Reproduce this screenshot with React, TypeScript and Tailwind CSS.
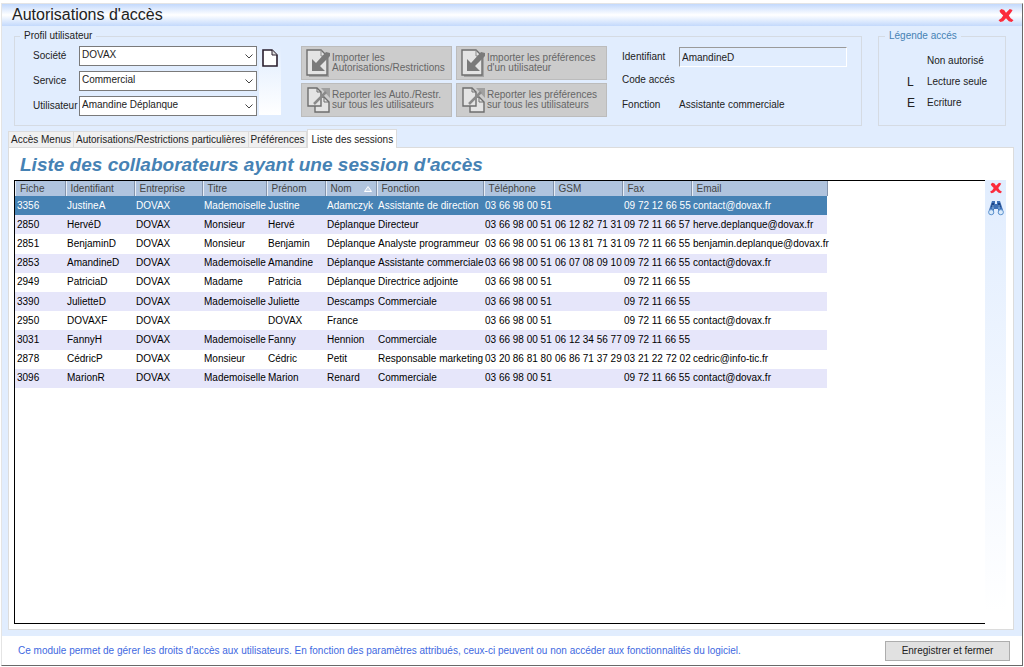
import React from 'react';

interface Session {
  fiche: string;
  identifiant: string;
  entreprise: string;
  titre: string;
  prenom: string;
  nom: string;
  fonction: string;
  telephone: string;
  gsm: string;
  fax: string;
  email: string;
}

const COLUMNS: { key: keyof Session; label: string; width: string }[] = [
  { key: 'fiche', label: 'Fiche', width: 'w-[50px]' },
  { key: 'identifiant', label: 'Identifiant', width: 'w-[69px]' },
  { key: 'entreprise', label: 'Entreprise', width: 'w-[68px]' },
  { key: 'titre', label: 'Titre', width: 'w-[64px]' },
  { key: 'prenom', label: 'Prénom', width: 'w-[59px]' },
  { key: 'nom', label: 'Nom', width: 'w-[51px]' },
  { key: 'fonction', label: 'Fonction', width: 'w-[107px]' },
  { key: 'telephone', label: 'Téléphone', width: 'w-[70px]' },
  { key: 'gsm', label: 'GSM', width: 'w-[69px]' },
  { key: 'fax', label: 'Fax', width: 'w-[69px]' },
  { key: 'email', label: 'Email', width: 'w-[136px]' },
];

const toSession = (row: string[]): Session => {
  const [fiche, identifiant, entreprise, titre, prenom, nom, fonction, telephone, gsm, fax, email] = row;
  return { fiche, identifiant, entreprise, titre, prenom, nom, fonction, telephone, gsm, fax, email };
};

const SESSIONS: Session[] = [
  ['3356', 'JustineA', 'DOVAX', 'Mademoiselle', 'Justine', 'Adamczyk', 'Assistante de direction', '03 66 98 00 51', '', '09 72 12 66 55', 'contact@dovax.fr'],
  ['2850', 'HervéD', 'DOVAX', 'Monsieur', 'Hervé', 'Déplanque', 'Directeur', '03 66 98 00 51', '06 12 82 71 31', '09 72 11 66 57', 'herve.deplanque@dovax.fr'],
  ['2851', 'BenjaminD', 'DOVAX', 'Monsieur', 'Benjamin', 'Déplanque', 'Analyste programmeur', '03 66 98 00 51', '06 13 81 71 31', '09 72 11 66 55', 'benjamin.deplanque@dovax.fr'],
  ['2853', 'AmandineD', 'DOVAX', 'Mademoiselle', 'Amandine', 'Déplanque', 'Assistante commerciale', '03 66 98 00 51', '06 07 08 09 10', '09 72 11 66 55', 'contact@dovax.fr'],
  ['2949', 'PatriciaD', 'DOVAX', 'Madame', 'Patricia', 'Déplanque', 'Directrice adjointe', '03 66 98 00 51', '', '09 72 11 66 55', ''],
  ['3390', 'JulietteD', 'DOVAX', 'Mademoiselle', 'Juliette', 'Descamps', 'Commerciale', '03 66 98 00 51', '', '09 72 11 66 55', ''],
  ['2950', 'DOVAXF', 'DOVAX', '', 'DOVAX', 'France', '', '03 66 98 00 51', '', '09 72 11 66 55', 'contact@dovax.fr'],
  ['3031', 'FannyH', 'DOVAX', 'Mademoiselle', 'Fanny', 'Hennion', 'Commerciale', '03 66 98 00 51', '06 12 34 56 77', '09 72 11 66 55', ''],
  ['2878', 'CédricP', 'DOVAX', 'Monsieur', 'Cédric', 'Petit', 'Responsable marketing', '03 20 86 81 80', '06 86 71 37 29', '03 21 22 72 02', 'cedric@info-tic.fr'],
  ['3096', 'MarionR', 'DOVAX', 'Mademoiselle', 'Marion', 'Renard', 'Commerciale', '03 66 98 00 51', '', '09 72 11 66 55', 'contact@dovax.fr'],
].map(toSession);

const CrossIcon: React.FC<{ className: string }> = ({ className }) => (
  <svg viewBox="0 0 16 16" className={className} aria-hidden="true">
    <path
      d="M1 3 3 1 6 2 8 5 12 1 15 2 14 4 11 8 13 11 16 13 14 15 11 14 8 11 5 14 2 15 0 13 3 11 5 8 2 5Z"
      fill="#fb2b3c"
    />
  </svg>
);

const PageIcon: React.FC = () => (
  <svg viewBox="0 0 16 18" className="h-[18px] w-4" aria-hidden="true">
    <path d="M1 1h9l5 5v11H1z" fill="#fff" stroke="#2a1f2e" strokeWidth="1.6" />
    <path d="M10 1v5h5" fill="#ddd" stroke="#2a1f2e" strokeWidth="1" />
  </svg>
);

const BinocularsIcon: React.FC = () => (
  <svg viewBox="0 0 16 16" className="h-4 w-4" aria-hidden="true">
    <path d="M4 1h3v3h2V1h3l1 3 2 6v4h-5V9H6v5H1v-4l2-6z" fill="#3f70b5" />
    <path d="M4 3h2v4H3zM10 3h2l1 4h-3z" fill="#1c4486" />
    <circle cx="3.2" cy="12.2" r="2.6" fill="#d9eafa" stroke="#5c92cf" />
    <circle cx="12.8" cy="12.2" r="2.6" fill="#d9eafa" stroke="#5c92cf" />
    <path d="M5 5v4M11 5v4" stroke="#8fbbe8" />
  </svg>
);

const ImportIcon: React.FC = () => (
  <svg viewBox="0 0 24 28" className="h-7 w-6 shrink-0" aria-hidden="true">
    <path d="M3 28V26h18V8h2v20z" fill="#a3a3a3" />
    <path d="M1 1h14l6 6v19H1z" fill="#e4e4e4" stroke="#6e6e6e" strokeWidth="1.4" />
    <path d="M15 1v6h6" fill="none" stroke="#8a8a8a" />
    <path d="m20 3 4 1v3L14 17l5 5H6V10l4 4z" fill="#7a7a7a" />
  </svg>
);

const ReportIcon: React.FC = () => (
  <svg viewBox="0 0 24 28" className="h-7 w-6 shrink-0" aria-hidden="true">
    <path d="M9 11h9l5 5v10H9z" fill="#e4e4e4" stroke="#6e6e6e" strokeWidth="1.4" />
    <path d="M18 11v5h5" fill="none" stroke="#6e6e6e" />
    <path d="M2 2h9l4 4v14H2z" fill="#e4e4e4" stroke="#6e6e6e" strokeWidth="1.4" />
    <path d="M11 2v4h4" fill="none" stroke="#6e6e6e" />
    <path d="M15 2h9v10z" fill="#a0a0a0" />
    <path d="m8 18 12-12" stroke="#8a8a8a" strokeWidth="2.5" />
  </svg>
);

const SelectField: React.FC<{ id: string; label: string; value: string }> = ({ id, label, value }) => (
  <div className="flex h-5 items-center">
    <label htmlFor={id} className="w-[46px]">
      {label}
    </label>
    <div className="relative flex-1">
      <select
        id={id}
        className="h-5 w-full appearance-none border border-[#7a7a7a] bg-white pb-[2px] pl-[2px] pr-5"
      >
        <option>{value}</option>
      </select>
      <svg viewBox="0 0 8 5" className="pointer-events-none absolute top-2 right-[4px] h-[5px] w-2" aria-hidden="true">
        <path d="m.5.5 3.5 3.5L7.5.5" fill="none" stroke="#444" />
      </svg>
    </div>
  </div>
);

const ActionButton: React.FC<{ icon: React.ReactNode; lines: string[] }> = ({ icon, lines }) => (
  <button
    type="button"
    className="flex h-[34px] items-center gap-[2px] border border-[#bcbcbc] bg-[#cccccc] pl-1 text-left leading-[10px] whitespace-nowrap text-[#666]"
  >
    {icon}
    <span>
      {lines[0]}
      <br />
      {lines[1]}
    </span>
  </button>
);

const ProfilePanel: React.FC = () => (
  <fieldset className="h-[97px] flex-1 border border-[#d5dbe3]">
    <legend className="ml-[5px] px-1 leading-[14px]">Profil utilisateur</legend>
    <div className="flex pt-[3px] pl-[18px]">
      <div className="flex w-[224px] flex-col gap-[5px]">
        <SelectField id="societe" label="Société" value="DOVAX" />
        <SelectField id="service" label="Service" value="Commercial" />
        <SelectField id="utilisateur" label="Utilisateur" value="Amandine Déplanque" />
      </div>
      <div className="ml-[2px] h-[69px] w-[22px] bg-linear-to-b from-[#e1edfe] to-white pt-[3px] pl-[3px]">
        <button type="button" aria-label="Nouveau" className="block">
          <PageIcon />
        </button>
      </div>
      <div className="ml-5 grid grid-cols-[151px_151px] gap-x-1 gap-y-[3px] self-start">
        <ActionButton icon={<ImportIcon />} lines={['Importer les', 'Autorisations/Restrictions']} />
        <ActionButton icon={<ImportIcon />} lines={['Importer les préférences', "d'un utilisateur"]} />
        <ActionButton icon={<ReportIcon />} lines={['Reporter les Auto./Restr.', 'sur tous les utilisateurs']} />
        <ActionButton icon={<ReportIcon />} lines={['Reporter les préférences', 'sur tous les utilisateurs']} />
      </div>
      <div className="mr-[14px] ml-[15px] grid flex-1 grid-cols-[57px_1fr] grid-rows-[22px_24px_25px] items-center whitespace-nowrap">
        <label htmlFor="identifiant">Identifiant</label>
        <input
          id="identifiant"
          readOnly
          value="AmandineD"
          className="h-5 w-full min-w-0 border border-t-[#9a9a9a] border-r-white border-b-white border-l-[#9a9a9a] bg-transparent px-[2px]"
        />
        <span>Code accés</span>
        <span />
        <span>Fonction</span>
        <span>Assistante commerciale</span>
      </div>
    </div>
  </fieldset>
);

const LEGEND = [
  { code: '', label: 'Non autorisé' },
  { code: 'L', label: 'Lecture seule' },
  { code: 'E', label: 'Ecriture' },
];

const LegendPanel: React.FC = () => (
  <fieldset className="h-[97px] w-[128px] border border-[#d5dbe3]">
    <legend className="ml-[6px] px-1 leading-[14px] text-[#4682b4]">Légende accés</legend>
    <dl className="grid grid-cols-[20px_1fr] grid-rows-[21px_21px_21px] items-center pt-[7px] pl-7">
      {LEGEND.map(({ code, label }) => (
        <React.Fragment key={label}>
          <dt className="text-[12px]">{code}</dt>
          <dd>{label}</dd>
        </React.Fragment>
      ))}
    </dl>
  </fieldset>
);

const TABS = ['Accès Menus', 'Autorisations/Restrictions particulières', 'Préférences', 'Liste des sessions'];

const Tabs: React.FC = () => (
  <div role="tablist" className="flex items-end">
    {TABS.map((tab) => {
      const active = tab === 'Liste des sessions';
      return (
        <button
          key={tab}
          type="button"
          role="tab"
          aria-selected={active}
          className={
            active
              ? 'z-10 -mb-px h-[19px] border border-b-0 border-[#dcdcdc] bg-white px-[3px] leading-[17px]'
              : 'h-4 border border-b-0 border-[#dcdcdc] bg-[#f0f0f0] px-[2px] leading-[15px] not-first:border-l-0'
          }
        >
          {tab}
        </button>
      );
    })}
  </div>
);

const SessionTable: React.FC = () => (
  <table className="h-[207px] w-[812px] table-fixed border-collapse whitespace-nowrap">
    <thead>
      <tr className="h-[15px] bg-[#b0c4de] text-left text-[#444]">
        {COLUMNS.map(({ key, label, width }) => (
          <th
            key={key}
            className={`${width} border-r border-[#8494ab] pl-[5px] leading-[14px] font-normal shadow-[inset_1px_0_#e8eef6]`}
          >
            <span className="flex items-center justify-between pr-1">
              {label}
              {key === 'nom' && (
                <svg viewBox="0 0 8 6" className="h-[6px] w-2" aria-label="Tri croissant">
                  <path d="M4 .5 7.5 5.5H.5z" fill="#c9d6e8" stroke="#fff" />
                </svg>
              )}
            </span>
          </th>
        ))}
      </tr>
    </thead>
    <tbody>
      {SESSIONS.map((session, index) => (
        <tr
          key={session.fiche}
          className={
            index === 0 ? 'bg-[#4682b4] text-white' : index % 2 ? 'bg-[#e6e6fa] text-black' : 'bg-white text-black'
          }
        >
          {COLUMNS.map(({ key }) => (
            <td key={key} className="h-[19px] p-0 pl-[2px] leading-[18px]">
              {session[key]}
            </td>
          ))}
        </tr>
      ))}
    </tbody>
  </table>
);

const App: React.FC = () => {
  return (
    <div className="flex min-h-screen bg-white pt-[3px] pr-px pb-px pl-px font-['Liberation_Sans',Arial,sans-serif] text-[10px] leading-[14px] text-[#222]">
      <div className="flex flex-1 flex-col border border-t-[#e4e4e4] border-r-[#696969] border-b-[#696969] border-l-[#e4e4e4] bg-[#e1edfe]">
        <header className="flex h-[22px] items-center justify-between bg-linear-to-b from-[#c3d9fc] via-white to-[#c3d9fc] pr-2 pl-[10px]">
          <h1 className="text-[16px] leading-[22px]">Autorisations d'accès</h1>
          <button type="button" aria-label="Fermer">
            <CrossIcon className="h-[15px] w-4" />
          </button>
        </header>

        <div className="flex gap-4 pt-[3px] pr-4 pl-3">
          <ProfilePanel />
          <LegendPanel />
        </div>

        <main className="flex flex-1 flex-col pt-[3px] pr-2 pb-[6px] pl-[6px]">
          <Tabs />
          <section className="flex flex-1 flex-col border border-[#dcdcdc] bg-white pr-[7px] pb-[5px] pl-[5px]">
            <h2 className="pt-[5px] pb-[3px] pl-[6px] text-[19px] leading-6 font-bold text-[#4682b4] italic">
              Liste des collaborateurs ayant une session d'accès
            </h2>
            <div className="flex flex-1">
              <div className="flex-1 border-t border-b border-l border-black">
                <SessionTable />
              </div>
              <div className="mb-3 flex w-[21px] flex-col items-center gap-[6px] bg-linear-to-b from-[#e1edfe] to-white pt-[2px]">
                <button type="button" aria-label="Supprimer" className="block">
                  <CrossIcon className="h-3 w-3" />
                </button>
                <button type="button" aria-label="Rechercher" className="block">
                  <BinocularsIcon />
                </button>
              </div>
            </div>
          </section>
        </main>

        <footer className="flex h-[29px] items-center justify-between bg-white pr-3 pl-4 text-[#4169e1]">
          <p>
            Ce module permet de gérer les droits d'accès aux utilisateurs. En fonction des paramètres attribués, ceux-ci
            peuvent ou non accéder aux fonctionnalités du logiciel.
          </p>
          <button type="button" className="h-5 w-[125px] border border-[#adadad] bg-[#e1e1e1] text-[#222]">
            Enregistrer et fermer
          </button>
        </footer>
      </div>
    </div>
  );
};

export default App;
